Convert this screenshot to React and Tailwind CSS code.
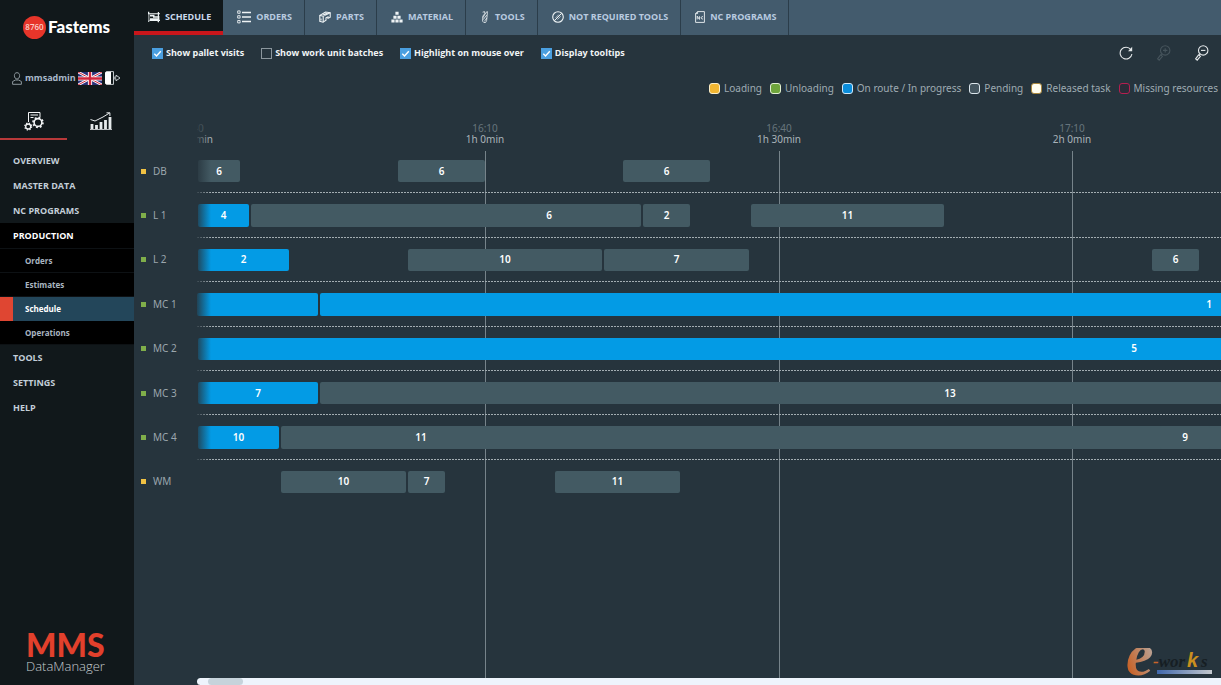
import React from "react";

const ORIGIN = 197;

const TICKS = [
  { x: 191, time: "15:40", span: "0h 30min" },
  { x: 485, time: "16:10", span: "1h 0min" },
  { x: 779, time: "16:40", span: "1h 30min" },
  { x: 1072, time: "17:10", span: "2h 0min" },
];

const ROWS = [
  { name: "DB", lamp: "warn", bars: [[198, 240, "6"], [398, 485, "6"], [623, 710, "6"]] },
  { name: "L 1", lamp: "ok", bars: [[198, 249, "4", true], [251, 641, "6", false, 549], [643, 690, "2"], [751, 944, "11"]] },
  { name: "L 2", lamp: "ok", bars: [[198, 289, "2", true], [408, 602, "10"], [604, 749, "7"], [1152, 1199, "6"]] },
  { name: "MC 1", lamp: "ok", bars: [[197, 318, "", true], [320, 2098, "1", true]] },
  { name: "MC 2", lamp: "ok", bars: [[198, 2070, "5", true]] },
  { name: "MC 3", lamp: "ok", bars: [[198, 318, "7", true], [320, 1580, "13"]] },
  { name: "MC 4", lamp: "ok", bars: [[198, 279, "10", true], [281, 2089, "11", false, 421], [1160, 1210, "9"]] },
  { name: "WM", lamp: "warn", bars: [[281, 406, "10"], [408, 445, "7"], [555, 680, "11"]] },
];

const LEGEND = [
  ["Loading", "bg-[#f2b632] border-[#fbeecb]"],
  ["Unloading", "bg-[#6fa53c] border-[#e3f0d2]"],
  ["On route / In progress", "bg-[#0a8ddb] border-[#cfe9fa]"],
  ["Pending", "bg-[#44555f] border-[#dce6ec]"],
  ["Released task", "bg-[#fffdf0] border-[#a8863c]"],
  ["Missing resources", "bg-[#2b2c38] border-[#b51f50]"],
];

function ScheduleIcon() {
  return (
    <svg viewBox="0 0 12 12" className="h-3 w-3" fill="currentColor" aria-hidden="true">
      <path d="M0 .8h1.300v1.400H12v1H1.300v7.600H0v-1h.5V3.200H0z" />
      <path d="M2 3.800h4.500v1.400h5v1.600H5V5.500H2zM2 7.200h9.500V9H12v1h-1v1.200H9.800V10H1.500V8.800H2z" />
      <path d="M9.800 1h1.200v10H9.800z" />
    </svg>
  );
}
function OrdersIcon() {
  return (
    <svg viewBox="0 0 14 14" className="h-3.5 w-3.5" fill="none" stroke="currentColor" aria-hidden="true">
      <path d="M5 2.5h9M5 7h9M5 11.5h9" strokeWidth="1.3" />
      <path d="M.7.9h2.4v2.4H.7zM.7 5.7h2.4v2.4H.7zM.7 10.5h2.4v2.4H.7z" strokeWidth=".9" />
    </svg>
  );
}
function PartsIcon() {
  return (
    <svg viewBox="0 0 12 12" className="h-3 w-3" fill="none" stroke="currentColor" strokeWidth="1.1" aria-hidden="true">
      <path d="M.8 4.400 6.500 1l4.700.8v4.400L9 7.400V5.800l-2 1v2.400l-3 2-3.200-.8z" />
      <path d="M.8 4.400l3.400.8 7-3.400M4.200 5.200v6M2 7.500v2M6.800 3.900 3.500 3M9 2.800 5.500 2" />
    </svg>
  );
}
function MaterialIcon() {
  return (
    <svg viewBox="0 0 12 12" className="h-3 w-3" fill="currentColor" aria-hidden="true">
      <path d="M4.4.8h3.2v3H4.4zM2.4 4.7h3.2v3H2.4zM6.4 4.7h3.2v3H6.4zM.4 8.6h3.2v3H.4zM4.4 8.6h3.2v3H4.4zM8.4 8.6h3.2v3H8.4z" />
    </svg>
  );
}
function ToolsIcon() {
  return (
    <svg viewBox="0 0 10 12" className="h-3 w-2.5" fill="none" stroke="currentColor" strokeWidth=".8" aria-hidden="true">
      <path d="M2.600 1.200 4.600.6l.2 2-2 2.600-.2 5 1.200 1.300h1.800l1-1.900.6-5.200L7.400.6 6 1.400 3 6.600M6.800 4 3.200 8.600M6.800 7 4.400 10.400" />
    </svg>
  );
}
function BlockedIcon() {
  return (
    <svg viewBox="0 0 12 12" className="h-3 w-3" fill="none" stroke="currentColor" aria-hidden="true">
      <circle cx="6" cy="6" r="5.3" strokeWidth="1.1" />
      <path d="M2.400 9.600l7.200-7.200" strokeWidth="1" />
      <path d="M3.600 6.800 6.900 3.500M5.300 8.600l3.300-3.300" strokeWidth=".7" />
    </svg>
  );
}
function NcIcon() {
  return (
    <svg viewBox="0 0 10 12" className="h-3 w-2.5" fill="none" stroke="currentColor" strokeWidth=".9" aria-hidden="true">
      <path d="M2.6.6h6.8v10.8H.6V2.6zM2.6.6v2h-2" />
      <path d="M2.2 8.4V5.2l2.2 3.2V5.2M8 5.8a1.2 1.2 0 1 0 0 2" />
    </svg>
  );
}

const TABS = [
  ["SCHEDULE", ScheduleIcon],
  ["ORDERS", OrdersIcon],
  ["PARTS", PartsIcon],
  ["MATERIAL", MaterialIcon],
  ["TOOLS", ToolsIcon],
  ["NOT REQUIRED TOOLS", BlockedIcon],
  ["NC PROGRAMS", NcIcon],
];

function Magnifier({ plus }) {
  return (
    <svg viewBox="0 0 14 16" className="h-4 w-3.5" fill="none" stroke="currentColor" strokeWidth="1.1" aria-hidden="true">
      <circle cx="8.2" cy="5.4" r="4.7" />
      <path d={plus ? "M6 5.4h4.4M8.2 3.2v4.4" : "M6 5.4h4.4"} />
      <path d="M5.2 9 4 10.4M3.6 9.8l1.8 1.5-3.2 3.9L.6 13.8z" />
    </svg>
  );
}

function Flag() {
  return (
    <svg viewBox="0 0 24 13" className="h-[13px] w-6" aria-label="English" role="img">
      <path fill="#2b3179" d="M0 0h24v13H0z" />
      <path d="M0 0l24 13M24 0 0 13" stroke="#fff" strokeWidth="2.6" />
      <path d="M0 0l24 13M24 0 0 13" stroke="#d2263c" strokeWidth="1" />
      <path d="M12 0v13M0 6.5h24" stroke="#fff" strokeWidth="4.2" />
      <path d="M12 0v13M0 6.5h24" stroke="#d2263c" strokeWidth="2.4" />
    </svg>
  );
}

function Gears() {
  return (
    <svg viewBox="0 0 20 20" className="h-5 w-5" fill="none" stroke="#f3f5f6" aria-hidden="true">
      <path d="M4.5 11V1.5H16V6M6.5 4H14M6.5 6.5h3M4.5 3v6" strokeWidth="1" />
      <circle cx="14" cy="11.5" r="3.9" strokeWidth="1.6" />
      <circle cx="14" cy="11.5" r="5" strokeWidth="1.6" strokeDasharray="1.9 2" />
      <circle cx="4.2" cy="15.5" r="2.5" strokeWidth="1.3" />
      <circle cx="4.2" cy="15.5" r="3.4" strokeWidth="1.3" strokeDasharray="1.3 1.4" />
    </svg>
  );
}

function Stats() {
  return (
    <svg viewBox="0 0 22 18" className="h-[18px] w-[22px]" fill="none" stroke="#e6eaec" aria-hidden="true">
      <path d="M2 17v-5M6.500 17v-4M11 17v-7M15.500 17V8M20 17V5" strokeWidth="2.800" />
      <path d="M0 17.5h22" strokeWidth=".8" />
      <path d="M.5 7.5 5 9l8-4 6.500-4M16.500.8h3.400V4" strokeWidth="1" />
    </svg>
  );
}

function Check({ label, checked }) {
  return (
    <label className="flex items-center gap-[3px] text-[9px] font-bold text-[#f1f4f6]">
      <span className="grid h-[11px] w-[11px]">
        <input
          type="checkbox"
          defaultChecked={checked}
          className="peer col-start-1 row-start-1 h-[11px] w-[11px] appearance-none border border-[#8b969d] checked:border-[#4a9fe0] checked:bg-[#4a9fe0]"
        />
        <svg viewBox="0 0 11 11" className="pointer-events-none invisible col-start-1 row-start-1 h-[11px] w-[11px] peer-checked:visible" fill="none" stroke="#fff" strokeWidth="1.4" aria-hidden="true">
          <path d="M2.3 5.8 4.5 8l4.3-4.8" />
        </svg>
      </span>
      {label}
    </label>
  );
}

function NavItem({ children }) {
  return (
    <a href="#" className="flex h-[25px] items-center pl-[13px] text-[9px] font-bold text-[#c3ced8]">
      {children}
    </a>
  );
}

function SubItem({ children, active }) {
  return (
    <a
      href="#"
      className={
        active
          ? "flex h-6 items-center border-l-[13px] border-[#df4632] bg-[#23465a] pl-3 text-[8px] font-bold text-white"
          : "flex h-6 items-center border-b border-[#0d1114] bg-black pl-[25px] text-[8px] font-bold text-[#aab6c0]"
      }
    >
      {children}
    </a>
  );
}

function Sidebar() {
  return (
    <aside className="flex w-[134px] shrink-0 flex-col bg-[#11181b] font-['Open_Sans','Noto_Sans',sans-serif]">
      <div className="mt-[15px] flex h-6 items-center gap-0.5 pl-[23px]">
        <span className="flex h-[23px] w-[23px] items-center justify-center rounded-full bg-[#e7352a] text-[8px] font-semibold text-[#fbd0c8]">8760</span>
        <span className="font-['Lato',sans-serif] text-[17px] leading-6 font-black text-white">Fastems</span>
      </div>
      <div className="mt-7 flex h-[22px] items-center pl-3 text-[9px] font-bold text-[#a9b8ca]">
        <svg viewBox="0 0 10 13" className="mr-[3px] h-[13px] w-2.5" fill="none" stroke="#8d979d" aria-hidden="true">
          <path d="M5 .7c-1.8 0-2.6 1.2-2.6 3C2.4 5.4 3.4 7 5 7s2.6-1.600 2.600-3.300C7.600 1.900 6.800.7 5 .7zM.6 12.300V9.500L3.500 8h3l2.900 1.500v2.800z" />
        </svg>
        mmsadmin
        <span className="ml-0.5 flex items-center gap-[3px]">
          <Flag />
          <button type="button" aria-label="Log out">
            <svg viewBox="0 0 16 14" className="block h-3.5 w-4" aria-hidden="true">
              <path fill="#fff" d="M0 1.500 1.500.3H6v13.400H1.500L0 12.500z" />
              <path d="M6 .6h2.500v12.800H6M8.500 6.200h2.500V4.200L15 7l-4 2.800V7.800H8.500" fill="none" stroke="#d4d9dc" strokeWidth=".9" />
            </svg>
          </button>
        </span>
      </div>
      <div className="mt-[17px] flex">
        <button type="button" aria-label="Production" className="flex h-[34px] flex-1 items-center justify-center border-b-2 border-[#b8393a] pb-0.5">
          <Gears />
        </button>
        <button type="button" aria-label="Statistics" className="flex h-[34px] flex-1 items-center justify-center border-b-2 border-transparent pb-0.5">
          <Stats />
        </button>
      </div>
      <nav className="mt-2">
        <NavItem>OVERVIEW</NavItem>
        <NavItem>MASTER DATA</NavItem>
        <NavItem>NC PROGRAMS</NavItem>
        <a href="#" className="flex h-[26px] items-center border-b border-[#0d1114] bg-black pl-[13px] text-[9px] font-bold text-white">PRODUCTION</a>
        <SubItem>Orders</SubItem>
        <SubItem>Estimates</SubItem>
        <SubItem active>Schedule</SubItem>
        <SubItem>Operations</SubItem>
        <NavItem>TOOLS</NavItem>
        <NavItem>SETTINGS</NavItem>
        <NavItem>HELP</NavItem>
      </nav>
      <div className="mt-auto pb-[11px] pl-[26px]">
        <div className="font-['Lato',sans-serif] text-[32px] leading-[29px] font-black text-[#e2402c]">MMS</div>
        <div className="text-[13px] leading-[15px] font-light text-[#c5cccf]">DataManager</div>
      </div>
    </aside>
  );
}

function Bar({ bar }) {
  const [from, to, label, active, labelAt] = bar;
  const span = labelAt ? (labelAt - from) * 2 : to - from;
  return (
    <div
      className={
        active
          ? "absolute inset-y-[11px] overflow-hidden rounded-[2px] bg-[#039be5]"
          : "absolute inset-y-[11px] overflow-hidden rounded-[2px] bg-[#435a63]"
      }
      style={{ left: from - ORIGIN, width: to - from }}
    >
      <div className="flex h-full items-center justify-center" style={{ width: span }}>
        {label}
      </div>
    </div>
  );
}

function Chart() {
  return (
    <div className="flex flex-1 flex-col pt-[22px]">
      <div className="flex flex-1">
        <div className="w-[63px] pt-[26px]">
          <ul className="grid h-[355px] grid-rows-8 pl-[7px]">
            {ROWS.map((r) => (
              <li key={r.name} className="flex items-center gap-[7px] text-[10px] text-[#9ba6ad]">
                <span className={r.lamp === "ok" ? "h-[5px] w-[5px] bg-[#7fae4a]" : "h-[5px] w-[5px] bg-[#f0c143]"} />
                {r.name}
              </li>
            ))}
          </ul>
        </div>
        <div className="relative flex-1 overflow-hidden">
          {TICKS.map((t) => (
            <div
              key={t.time}
              className="absolute inset-y-0 flex w-20 -translate-x-1/2 flex-col items-center text-[10px] leading-[11px] text-[#a9b3b9]"
              style={{ left: t.x - ORIGIN }}
            >
              <div className="text-[#66747c]">{t.time}</div>
              <div>{t.span}</div>
              <div className="mt-1.5 w-px flex-1 bg-[#76838a]" />
            </div>
          ))}
          <div className="relative mt-[26px] grid h-[355px] grid-rows-8 text-[10px] font-semibold text-white">
            {ROWS.map((r) => (
              <div key={r.name} className="group relative flex items-end">
                <div className="h-px flex-1 bg-[repeating-linear-gradient(90deg,#a3adb2_0_2px,transparent_2px_3px)] group-last:hidden" />
                {r.bars.map((b) => (
                  <Bar key={b[0]} bar={b} />
                ))}
              </div>
            ))}
          </div>
          <div className="pointer-events-none absolute inset-y-0 left-0 w-3.5 bg-linear-to-r from-[#26343d]/85 to-transparent" />
        </div>
      </div>
      <div className="ml-[63px] h-[7px] rounded-l-full bg-[#eef4fc] pl-[11px]">
        <div className="h-full w-[35px] rounded-full bg-[#c6d3db]" />
      </div>
    </div>
  );
}

function Watermark() {
  return (
    <svg viewBox="0 0 88 30" className="pointer-events-none absolute right-2 bottom-[7px] h-[30px] w-[88px]">
      <defs>
        <linearGradient id="swoosh" x1="0" y1="1" x2="1" y2="0">
          <stop offset="0.2" stopColor="#c8642a" />
          <stop offset="0.9" stopColor="#b5b2b0" />
        </linearGradient>
        <linearGradient id="stripe">
          <stop offset="0" stopColor="#3f67ab" />
          <stop offset="1" stopColor="#c3c8cd" />
        </linearGradient>
      </defs>
      <path d="M32 22h55v4H32z" fill="url(#stripe)" />
      <g fontStyle="italic" fontWeight="bold">
        <text x="1" y="27" fontSize="62" fontFamily="Liberation Serif, serif" fill="url(#swoosh)">e</text>
        <text x="28" y="19" fontSize="17" fontFamily="Liberation Serif, serif" fill="#161e23">
          <tspan fill="#c8642a">-</tspan>wor
        </text>
        <text x="62" y="19" fontSize="20" fontFamily="Liberation Sans, sans-serif" fill="#c98f1e">k</text>
        <text x="76" y="19" fontSize="17" fontFamily="Liberation Serif, serif" fill="#161e23">s</text>
      </g>
    </svg>
  );
}

export default function App() {
  return (
    <div className="relative flex min-h-screen overflow-hidden bg-[#26343d] font-['Noto_Sans','Open_Sans',sans-serif]">
      <Sidebar />
      <main className="flex min-w-0 flex-1 flex-col">
        <header className="flex h-[35px] bg-[#435b6d] font-['Open_Sans','Noto_Sans',sans-serif]">
          {TABS.map(([name, Icon], i) => (
            <button
              key={name}
              type="button"
              className={
                i === 0
                  ? "flex items-center gap-[5px] bg-[#11181b] pr-3 pb-px pl-3.5 text-[9px] font-bold text-[#cbd8ec] shadow-[inset_0_-4px_0_#c9161b]"
                  : "flex items-center gap-[5px] border-r border-[#2b3d4a] pr-3 pb-px pl-3.5 text-[9px] font-bold text-[#b9cbe0]"
              }
            >
              <span className="text-[#eef3f5]">
                <Icon />
              </span>
              {name}
            </button>
          ))}
        </header>
        <div className="flex h-9 items-center pr-3 pl-[18px] font-['Open_Sans','Noto_Sans',sans-serif]">
          <div className="flex gap-[17px]">
            <Check label="Show pallet visits" checked />
            <Check label="Show work unit batches" />
            <Check label="Highlight on mouse over" checked />
            <Check label="Display tooltips" checked />
          </div>
          <div className="ml-auto flex items-center gap-6 text-[#e5e9eb]">
            <button type="button" aria-label="Refresh">
              <svg viewBox="0 0 14 14" className="block h-3.5 w-3.5" fill="none" stroke="currentColor" strokeWidth="1.100" aria-hidden="true">
                <path d="M11.800 3.600A5.900 5.900 0 1 0 12.900 8" />
                <path d="M13.200.8v4.400H9z" fill="currentColor" stroke="none" />
              </svg>
            </button>
            <button type="button" aria-label="Zoom in" disabled className="text-[#46545c]">
              <Magnifier plus />
            </button>
            <button type="button" aria-label="Zoom out">
              <Magnifier />
            </button>
          </div>
        </div>
        <ul className="flex h-[30px] items-center justify-end gap-2 pt-1 pr-[3px] text-[10px] text-[#9fabb2]">
          {LEGEND.map(([name, swatch]) => (
            <li key={name} className="flex items-center gap-1">
              <span className={"h-[11px] w-[11px] rounded-[3px] border " + swatch} />
              {name}
            </li>
          ))}
        </ul>
        <Chart />
      </main>
      <Watermark />
    </div>
  );
}
